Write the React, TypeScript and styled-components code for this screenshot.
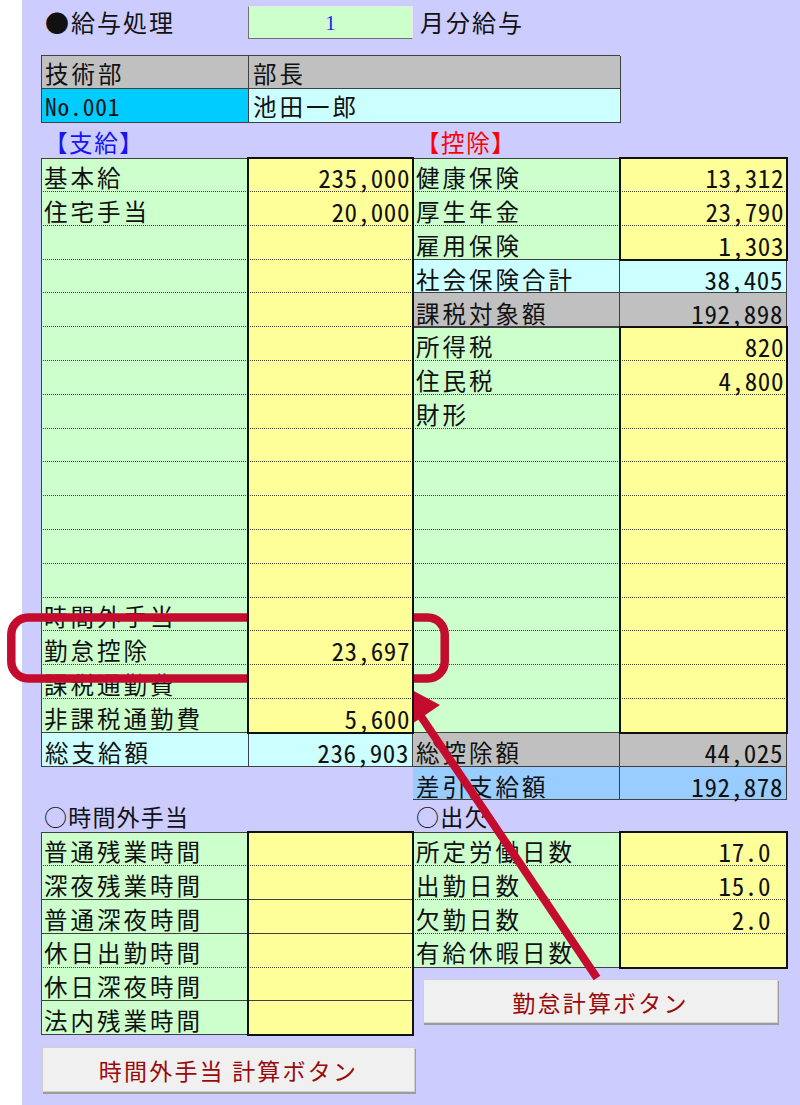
import React from 'react'
import styled, { createGlobalStyle } from 'styled-components'

const ROW = 33.8
const LINE = '#404040'

const tones = {
  green: '#ccffcc',
  yellow: '#ffff99',
  cyan: '#ccffff',
  grey: '#c0c0c0',
  sky: '#99ccff',
  blue: '#00ccff',
}
type Tone = keyof typeof tones
type Rule = 'dotted' | 'solid' | 'none'

const GlobalStyle = createGlobalStyle`
  html, body {
    margin: 0;
    padding: 0;
    background: #fff;
  }
  body {
    font-family: 'Noto Sans CJK JP', sans-serif;
    color: #111;
  }
`

const App: React.FC = () => (
  <>
    <GlobalStyle />
    <Page>
      <Sheet>
        <TitleRow>
          <TitleText>●給与処理</TitleText>
          <MonthBox>1</MonthBox>
          <TitleText indent={7}>月分給与</TitleText>
        </TitleRow>

        <HeaderTable>
          <HeaderCell tone="grey">技術部</HeaderCell>
          <HeaderCell tone="grey" last>部長</HeaderCell>
          <HeaderCell tone="blue" latin>No.001</HeaderCell>
          <HeaderCell tone="cyan" last>池田一郎</HeaderCell>
        </HeaderTable>

        <TwoSides>
          <SectionTitle color="#1515f0">【支給】</SectionTitle>
          <SectionTitle color="#ff0000">【控除】</SectionTitle>
        </TwoSides>

        <TwoSides>
          <Side>
            <Ledger rows={payments} edge />
            <PlainRow label="総支給額" value="236,903" tone="cyan" edge />
          </Side>
          <Side>
            <Ledger rows={insurance} />
            <PlainRow label="社会保険合計" value="38,405" tone="cyan" />
            <PlainRow label="課税対象額" value="192,898" tone="grey" />
            <Ledger rows={taxes} />
            <PlainRow label="総控除額" value="44,025" tone="grey" />
            <PlainRow label="差引支給額" value="192,878" tone="sky" />
          </Side>
        </TwoSides>

        <TwoSides>
          <SubTitle>○時間外手当</SubTitle>
          <SubTitle>○出欠</SubTitle>
        </TwoSides>

        <TwoSides>
          <Side>
            <Ledger rows={overtime} edge />
            <CalcButton width={373} height={45} gap={11.5}>時間外手当 計算ボタン</CalcButton>
          </Side>
          <Side>
            <Ledger rows={attendance} wide />
            <CalcButton width={355} height={44} gap={11} indent={10}>勤怠計算ボタン</CalcButton>
          </Side>
        </TwoSides>
      </Sheet>

      {/* red callout drawn over the sheet */}
      <Callout width="800" height="1105" viewBox="0 0 800 1105">
        <rect x="11.3" y="617.5" width="433.4" height="61" rx="17" fill="none" stroke="#c40c2e" strokeWidth="8.5" />
        <line x1="597" y1="978" x2="418" y2="712" stroke="#c40c2e" strokeWidth="8" />
        <polygon points="397,682 403,730 440,705" fill="#c40c2e" />
      </Callout>
    </Page>
  </>
)

export default App

type Entry = { label?: string; value?: string; rule?: Rule }

const blank = (n: number): Entry[] => Array.from({ length: n }, () => ({}))

const payments: Entry[] = [
  { label: '基本給', value: '235,000' },
  { label: '住宅手当', value: '20,000' },
  ...blank(11),
  { label: '時間外手当' },
  { label: '勤怠控除', value: '23,697' },
  { label: '課税通勤費' },
  { label: '非課税通勤費', value: '5,600' },
]

const insurance: Entry[] = [
  { label: '健康保険', value: '13,312' },
  { label: '厚生年金', value: '23,790' },
  { label: '雇用保険', value: '1,303' },
]

const taxes: Entry[] = [
  { label: '所得税', value: '820' },
  { label: '住民税', value: '4,800' },
  { label: '財形' },
  ...blank(9),
]

const overtime: Entry[] = [
  { label: '普通残業時間' },
  { label: '深夜残業時間', rule: 'solid' },
  { label: '普通深夜時間', rule: 'solid' },
  { label: '休日出勤時間' },
  { label: '休日深夜時間', rule: 'solid' },
  { label: '法内残業時間' },
]

const attendance: Entry[] = [
  { label: '所定労働日数', value: '17.0' },
  { label: '出勤日数', value: '15.0' },
  { label: '欠勤日数', value: '2.0' },
  { label: '有給休暇日数' },
]

// label column + framed yellow value column
const Ledger: React.FC<{ rows: Entry[]; edge?: boolean; wide?: boolean }> = ({ rows, edge, wide }) => (
  <LedgerGrid>
    <LabelStack edge={edge}>
      {rows.map((r, i) => (
        <Cell key={i} rule={i === rows.length - 1 ? 'solid' : r.rule ?? 'dotted'}>
          <Label>{r.label}</Label>
        </Cell>
      ))}
    </LabelStack>
    <ValueBox>
      {rows.map((r, i) => (
        <Cell key={i} rule={i === rows.length - 1 ? 'none' : r.rule ?? 'dotted'} numeric>
          <Amount pad={wide ? 16 : 3}>{r.value}</Amount>
        </Cell>
      ))}
    </ValueBox>
  </LedgerGrid>
)

const PlainRow: React.FC<{ label: string; value: string; tone: Tone; edge?: boolean }> = ({ label, value, tone, edge }) => (
  <PlainGrid tone={tone} edge={edge}>
    <PlainLabel>
      <Label>{label}</Label>
    </PlainLabel>
    <Cell rule="none" numeric>
      <Amount pad={3}>{value}</Amount>
    </Cell>
  </PlainGrid>
)

const Page = styled.div`
  position: relative;
  width: 800px;
  height: 1105px;
  padding-left: 22px;
  box-sizing: border-box;
  overflow: hidden;
`

const Sheet = styled.div`
  height: 100%;
  background: #ccccff;
  padding: 5px 0 0 19px;
  box-sizing: border-box;
`

const TitleRow = styled.div`
  display: grid;
  grid-template-columns: 207px 165px auto;
  height: 33px;
  align-items: center;
`

const TitleText = styled.div<{ indent?: number }>`
  font-size: 24px;
  letter-spacing: 2px;
  padding-left: ${p => p.indent ?? 4}px;
  line-height: 34px;
`

const MonthBox = styled.div`
  height: 33px;
  box-sizing: border-box;
  background: #ccffcc;
  border-left: 1px solid #707070;
  border-bottom: 1px solid #707070;
  border-top: 1px solid #e8e8e8;
  border-right: 1px solid #e8e8e8;
  color: #2323ee;
  font-family: 'Liberation Serif', serif;
  font-size: 21px;
  text-align: center;
  line-height: 33px;
`

const HeaderTable = styled.div`
  margin-top: 16.7px;
  display: grid;
  grid-template-columns: 207px 372px;
  width: 579px;
  border-top: 1px solid ${LINE};
  border-left: 1px solid ${LINE};
  box-sizing: border-box;
`

const HeaderCell = styled.div<{ tone: Tone; last?: boolean; latin?: boolean }>`
  height: ${ROW}px;
  box-sizing: border-box;
  background: ${p => tones[p.tone]};
  border-right: 1px solid ${LINE};
  border-bottom: 1px solid ${LINE};
  font-size: 23.5px;
  letter-spacing: ${p => (p.latin ? 0.8 : 3)}px;
  font-feature-settings: 'hwid';
  line-height: 35px;
  padding-left: ${p => (p.last ? 4 : 3)}px;
  white-space: nowrap;
`

const TwoSides = styled.div`
  display: grid;
  grid-template-columns: 372px 374px;
  align-items: start;
`

const Side = styled.div`
  display: flex;
  flex-direction: column;
`

const SectionTitle = styled.div<{ color: string }>`
  height: 35px;
  color: ${p => p.color};
  font-size: 23.5px;
  letter-spacing: 1.6px;
  line-height: 38px;
  padding-left: 3px;
`

const SubTitle = styled.div`
  height: 32px;
  font-size: 23px;
  letter-spacing: 1.2px;
  line-height: 33px;
  padding-left: 3px;
`

const LedgerGrid = styled.div`
  display: grid;
  grid-template-columns: 207px 1fr;
`

const LabelStack = styled.div<{ edge?: boolean }>`
  background: #ccffcc;
  box-shadow: inset ${p => (p.edge ? '1px' : '0')} 1px 0 ${LINE};
  display: flex;
  flex-direction: column;
`

const ValueBox = styled.div`
  position: relative;
  z-index: 1;
  background: #ffff99;
  outline: 2px solid #111;
  outline-offset: -1px;
  display: flex;
  flex-direction: column;
`

const Cell = styled.div<{ rule: Rule; numeric?: boolean }>`
  height: ${ROW}px;
  flex: none;
  box-sizing: border-box;
  border-bottom: ${p => (p.rule === 'none' ? '0' : `1px ${p.rule} ${LINE}`)};
  display: flex;
  align-items: center;
  justify-content: ${p => (p.numeric ? 'flex-end' : 'flex-start')};
  white-space: nowrap;
`

const Label = styled.span`
  font-size: 23.5px;
  line-height: 1;
  letter-spacing: 3px;
  padding-left: 3px;
  padding-top: 6px;
`

const Amount = styled.span<{ pad: number }>`
  font-size: 25px;
  line-height: 1;
  letter-spacing: 0.6px;
  font-feature-settings: 'hwid';
  padding-right: ${p => p.pad}px;
  padding-top: 6px;
`

const PlainGrid = styled.div<{ tone: Tone; edge?: boolean }>`
  display: grid;
  grid-template-columns: 207px 1fr;
  height: ${ROW}px;
  box-sizing: border-box;
  background: ${p => tones[p.tone]};
  border-bottom: 1px solid ${LINE};
  border-right: 1px solid ${LINE};
  border-left: ${p => (p.edge ? `1px solid ${LINE}` : 'none')};
`

const PlainLabel = styled.div`
  border-right: 1px solid ${LINE};
  display: flex;
  align-items: center;
  white-space: nowrap;
`

const CalcButton = styled.button<{ width: number; height: number; gap: number; indent?: number }>`
  width: ${p => p.width}px;
  height: ${p => p.height}px;
  margin-top: ${p => p.gap}px;
  margin-left: ${p => p.indent ?? 1}px;
  background: #f0f0f0;
  border: 1px solid #cfcfcf;
  box-shadow: 1px 2px 0 #9c9c9c;
  color: #9a0a0a;
  font-family: 'Noto Sans CJK JP', sans-serif;
  font-size: 23px;
  letter-spacing: 2.2px;
  padding: 2px 0 0;
`

const Callout = styled.svg`
  position: absolute;
  top: 0;
  left: 0;
  pointer-events: none;
`
